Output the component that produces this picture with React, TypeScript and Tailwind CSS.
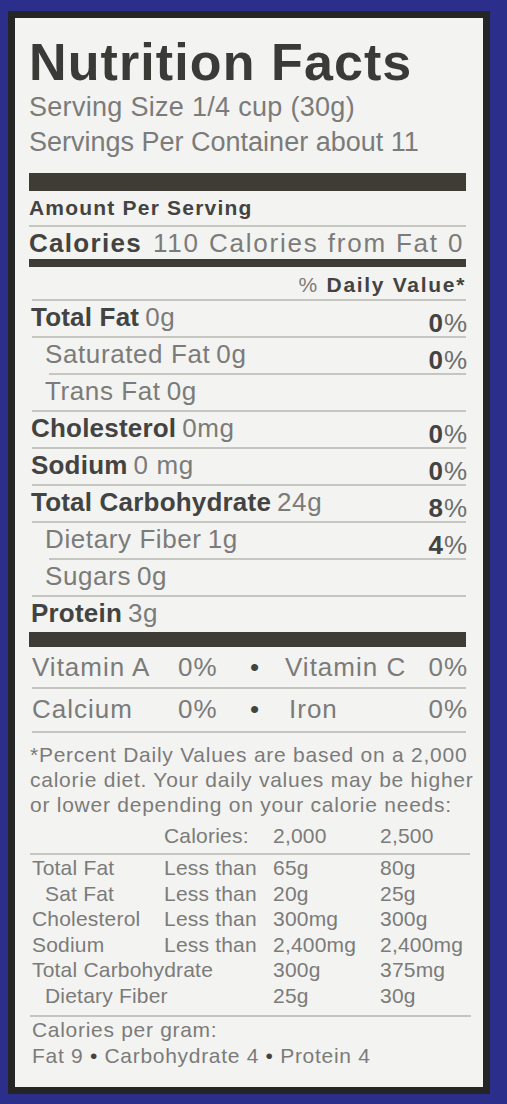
/** Nutrition Facts label on a blue box */

type Nutrient = {
  name: string;
  amount: string;
  dv?: string;
  bold?: boolean;
  indent?: boolean;
  line?: 'full' | 'indent' | 'none';
};

const nutrients: Nutrient[] = [
  { name: 'Total Fat', amount: '0g', dv: '0', bold: true, line: 'full' },
  { name: 'Saturated Fat', amount: '0g', dv: '0', indent: true, line: 'indent' },
  { name: 'Trans Fat', amount: '0g', indent: true, line: 'full' },
  { name: 'Cholesterol', amount: '0mg', dv: '0', bold: true, line: 'full' },
  { name: 'Sodium', amount: '0 mg', dv: '0', bold: true, line: 'full' },
  { name: 'Total Carbohydrate', amount: '24g', dv: '8', bold: true, line: 'full' },
  { name: 'Dietary Fiber', amount: '1g', dv: '4', indent: true, line: 'indent' },
  { name: 'Sugars', amount: '0g', indent: true, line: 'full' },
  { name: 'Protein', amount: '3g', bold: true, line: 'none' },
];

const limits = [
  { name: 'Total Fat', less: true, a: '65g', b: '80g' },
  { name: 'Sat Fat', less: true, a: '20g', b: '25g', indent: true },
  { name: 'Cholesterol', less: true, a: '300mg', b: '300g' },
  { name: 'Sodium', less: true, a: '2,400mg', b: '2,400mg' },
  { name: 'Total Carbohydrate', less: false, a: '300g', b: '375mg' },
  { name: 'Dietary Fiber', less: false, a: '25g', b: '30g', indent: true },
];

function Rule({ indent = false }: { indent?: boolean }) {
  return <div className={indent ? 'h-[2px] ml-[20px] bg-[#c6c6c1]' : 'h-[2px] ml-[3px] bg-[#c6c6c1]'} />;
}

export default function App() {
  return (
    <div className="w-[507px] h-[1104px] bg-[#2b2e8b] pt-[11px] pl-[8px] font-['Liberation_Sans',Arial,sans-serif]">
      <div className="w-[482px] h-[1083px] border-[7px] border-[#262526] bg-[#f3f3f1] pl-[14px] pr-[17px] pt-[18px]">
        {/* 标题 */}
        <h1 className="h-[52px] text-[52px] leading-[52px] font-bold tracking-[1.1px] text-[#3a3a37] whitespace-nowrap">
          Nutrition Facts
        </h1>
        <div className="mt-[2px] text-[27px] leading-[35px] text-[#7b7b7a] whitespace-nowrap">
          <p className="tracking-[0.3px]">Serving Size 1/4 cup (30g)</p>
          <p>Servings Per Container about 11</p>
        </div>

        <div className="mt-[13px] h-[18px] bg-[#3e3c35]" />

        <div className="h-[34px] text-[21px] leading-[34px] font-bold tracking-[1.2px] text-[#434342]">
          Amount Per Serving
        </div>
        <div className="h-[2px] bg-[#c6c6c1]" />

        <div className="h-[32px] text-[26px] leading-[32px] whitespace-nowrap text-[#7b7b7a]">
          <span className="font-bold tracking-[1.3px] text-[#434342]">Calories</span>
          <span className="ml-[11px] tracking-[1.8px]">110 Calories from Fat 0</span>
        </div>
        <div className="h-[8px] bg-[#3e3c35]" />

        <div className="h-[32px] pt-[4px] text-[21px] leading-[28px] text-right tracking-[1.7px] text-[#434342]">
          <span className="font-normal text-[#7b7b7a]">% </span>
          <span className="font-bold">Daily Value*</span>
        </div>
        <div className="h-[2px] ml-[3px] bg-[#c6c6c1]" />

        {/* 营养成分行 */}
        {nutrients.map((n) => (
          <div key={n.name}>
            <div className="h-[35px] flex justify-between text-[26px] whitespace-nowrap">
              <div className={n.indent ? 'pl-[16px] leading-[32px]' : 'pl-[2px] leading-[32px]'}>
                <span className={n.bold ? 'font-bold tracking-[0.2px] text-[#434342]' : 'tracking-[0.6px] text-[#7b7b7a]'}>{n.name}</span>
                <span className="ml-[6px] tracking-[0.6px] text-[#7b7b7a]">{n.amount}</span>
              </div>
              {n.dv && (
                <div className="pt-[6px] leading-[32px] -mr-[2px] tracking-[1px]">
                  <span className="font-bold text-[#434342]">{n.dv}</span>
                  <span className="text-[#6f6f6e]">%</span>
                </div>
              )}
            </div>
            {n.line === 'full' && <Rule />}
            {n.line === 'indent' && <Rule indent />}
          </div>
        ))}

        <div className="h-[15px] bg-[#3e3c35]" />

        {/* 维生素与矿物质 */}
        <div className="h-[40px] pl-[3px] flex text-[26px] leading-[40px] tracking-[1px] text-[#7b7b7a] whitespace-nowrap">
          <span className="w-[146px]">Vitamin A</span>
          <span className="w-[60px]">0%</span>
          <span className="w-[34px] text-center text-[#434342]">•</span>
          <span className="ml-[13px] flex-1">Vitamin C</span>
          <span className="-mr-[2px]">0%</span>
        </div>
        <Rule />
        <div className="h-[42px] pl-[3px] flex text-[26px] leading-[40px] tracking-[1px] text-[#7b7b7a] whitespace-nowrap">
          <span className="w-[146px]">Calcium</span>
          <span className="w-[60px]">0%</span>
          <span className="w-[34px] text-center text-[#434342]">•</span>
          <span className="ml-[17px] flex-1">Iron</span>
          <span className="-mr-[2px]">0%</span>
        </div>
        <Rule />

        {/* 脚注 */}
        <p className="mt-[9px] pl-[1px] text-[21px] leading-[25px] tracking-[0.75px] text-[#7b7b7a] whitespace-nowrap">
          *Percent Daily Values are based on a 2,000
          <br />
          calorie diet. Your daily values may be higher
          <br />
          or lower depending on your calorie needs:
        </p>

        <div className="mt-[6px] h-[25px] pl-[3px] flex text-[21px] leading-[25px] tracking-[0.2px] text-[#7b7b7a] whitespace-nowrap">
          <span className="w-[132px]" />
          <span className="w-[109px]">Calories:</span>
          <span className="w-[107px]">2,000</span>
          <span>2,500</span>
        </div>
        <div className="mt-[5px] h-[2px] ml-[1px] -mr-[4px] bg-[#c6c6c1]" />

        <div className="text-[21px] leading-[25.5px] tracking-[0.2px] text-[#7b7b7a] whitespace-nowrap">
          {limits.map((r) => (
            <div key={r.name} className="h-[25.5px] pl-[3px] flex">
              <span className={r.indent ? 'w-[132px] pl-[13px]' : 'w-[132px]'}>{r.less || r.indent ? r.name : ''}</span>
              {r.less || r.indent ? (
                <span className="w-[109px]">{r.less ? 'Less than' : ''}</span>
              ) : (
                <span className="w-[109px] -ml-[132px] pl-[132px] box-content">
                  <span className="-ml-[132px]">{r.name}</span>
                </span>
              )}
              <span className="w-[107px]">{r.a}</span>
              <span>{r.b}</span>
            </div>
          ))}
        </div>
        <div className="mt-[7px] h-[2px] ml-[1px] -mr-[5px] bg-[#c6c6c1]" />

        <div className="pl-[3px] text-[21px] leading-[25.5px] tracking-[0.7px] text-[#7b7b7a] whitespace-nowrap">
          <p>Calories per gram:</p>
          <p>
            Fat 9 <span className="text-[#434342]">•</span> Carbohydrate 4{' '}
            <span className="text-[#434342]">•</span> Protein 4
          </p>
        </div>
      </div>
    </div>
  );
}
